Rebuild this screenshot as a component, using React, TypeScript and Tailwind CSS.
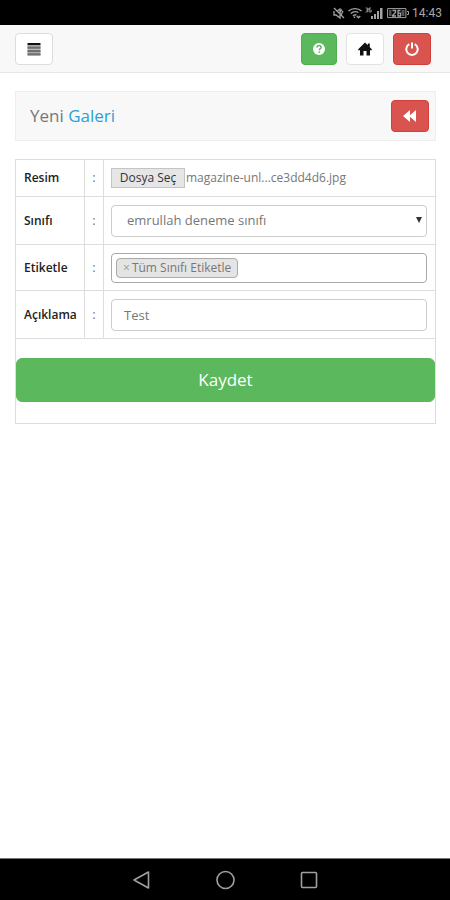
import { useState } from 'react';

const cell = 'border-b border-r border-[#dddddd]';

function StatusIcons() {
  return (
    <div className="flex items-center gap-[3px] text-[#a3a3a3]">
      {/* Muted bell */}
      <svg className="h-3 w-3" viewBox="0 0 12 12" fill="none" stroke="currentColor" strokeWidth="1.300">
        <path d="M1 4v4h2l4 3V2L3.500 4.500M9 2.500L7 5M1 1l10 10M8 8l2-4" />
      </svg>
      {/* Wifi */}
      <svg className="h-3 w-[14px]" viewBox="0 0 14 12" fill="none" stroke="currentColor" strokeWidth="1.400">
        <path d="M.5 4C4 .8 10 .8 13.500 4M2.800 6.500C5 4.500 8 4.200 10.500 5.500M5 9c1.200-1.400 2.500-1.500 3.500-.7" />
        <path d="M6.500 9.500v1.500M8.800 9l1.700 1.800L12.200 9" />
      </svg>
      {/* Mobile signal */}
      <svg className="h-3 w-[18px]" viewBox="0 0 18 12" fill="currentColor">
        <path d="M6 9h2v3H6zM9 7h2v5H9zM12 4h2v8h-2zM15 1h2.500v11H15z" />
        <path d="M.5 1h2M1 3h1.500M.5 5h2V1M4 1v4h2.200V3H4V1h2" fill="none" stroke="currentColor" strokeWidth=".8" />
      </svg>
      {/* Battery */}
      <svg className="ml-px h-3 w-[22px]" viewBox="0 0 22 12">
        <path d="M.6 1.600h18.300v9H.6zM20 4.500h1.500v3H20" fill="none" stroke="currentColor" strokeWidth="1" />
        <path d="M2 3h2.500v6H2zM14.500 3h3v6h-3z" fill="currentColor" opacity=".5" />
        <path d="M5.500 3.500h3v2l-3 3v.5h3.500M13.500 3.500H11V9h2.500V6.200H11" fill="none" stroke="currentColor" strokeWidth="1.300" />
      </svg>
    </div>
  );
}

function MenuIcon() {
  return (
    <svg className="h-[14px] w-[14px]" viewBox="0 0 14 14">
      <path d="M.5 1h13v2.200H.5z" fill="#111" />
      <path d="M.5 4.500h13v2.200H.5zM.5 8h13v2.200H.5zM.5 11.300h13v2.200H.5z" fill="#666" />
      <path d="M.5 3.200h13v10H.5z" fill="#777" opacity=".5" />
    </svg>
  );
}

function HelpIcon() {
  return (
    <svg className="h-3 w-3" viewBox="0 0 12 12">
      <circle cx="6" cy="6" r="6" fill="#fff" />
      <path d="M4 4.600C4 3.300 4.900 2.600 6 2.600s2.100.7 2.100 1.800C8.100 5.700 6.300 5.700 6.300 7.200" fill="none" stroke="#5cb85c" strokeWidth="1.500" />
      <path d="M5.500 8.300h1.600v1.500H5.500z" fill="#5cb85c" />
    </svg>
  );
}

function HomeIcon() {
  return (
    <svg className="h-[14px] w-[14px]" viewBox="0 0 14 14" fill="#111">
      <path d="M7 .5l2.800 2.800V1.500h2v3.800L13.800 7.300v1H12V13.500H8.500V9h-3v4.500H2V8.300H.2v-1z" />
    </svg>
  );
}

function PowerIcon() {
  return (
    <svg className="h-[14px] w-[14px]" viewBox="0 0 14 14" fill="none" stroke="#fff" strokeWidth="2">
      <path d="M4.300 2.200A5.700 5.700 0 1 0 9.700 2.200" />
      <path d="M7 .5v6" />
    </svg>
  );
}

function BackwardIcon() {
  return (
    <svg className="h-3 w-[14px]" viewBox="0 0 14 12" fill="#fff">
      <path d="M7 0v5.200L13 0v12L7 6.800V12L0 6z" />
    </svg>
  );
}

export default function App() {
  const [tags, setTags] = useState(['Tüm Sınıfı Etiketle']);
  const [fileName, setFileName] = useState('magazine-unl...ce3dd4d6.jpg');

  return (
    <div className="flex min-h-screen flex-col bg-white font-['Open_Sans',sans-serif] text-[13px] text-[#777777]">
      {/* Status bar */}
      <div className="flex h-[25px] items-center justify-end gap-[3px] bg-black pr-2">
        <StatusIcons />
        <span className="font-[Roboto,sans-serif] text-xs leading-4 text-[#a8a8a8]">14:43</span>
      </div>

      {/* Top bar */}
      <header className="flex h-12 items-center justify-between border-b border-[#e7e7e7] bg-[#f8f8f8] pr-[19px] pl-[15px]">
        <button aria-label="Menü" className="flex h-8 w-[38px] items-center justify-center rounded border border-[#dddddd] bg-white">
          <MenuIcon />
        </button>
        <div className="flex gap-[9px]">
          <button aria-label="Yardım" className="flex h-8 w-9 items-center justify-center rounded border border-[#4cae4c] bg-[#5cb85c]">
            <HelpIcon />
          </button>
          <button aria-label="Ana sayfa" className="flex h-8 w-[38px] items-center justify-center rounded border border-[#e3e3e3] bg-white">
            <HomeIcon />
          </button>
          <button aria-label="Çıkış" className="flex h-8 w-[38px] items-center justify-center rounded border border-[#d43f3a] bg-[#d9534f]">
            <PowerIcon />
          </button>
        </div>
      </header>

      <main className="flex-1 pt-[18px] pr-[14px] pl-[15px]">
        {/* Page title */}
        <div className="flex h-[50px] items-center justify-between border border-[#eeeeee] bg-[#f8f8f8] pr-[6px] pl-[14px]">
          <h1 className="text-[17px]">
            Yeni <span className="text-[#2a9fd6]">Galeri</span>
          </h1>
          <button aria-label="Geri" className="flex h-8 w-[38px] items-center justify-center rounded border border-[#d43f3a] bg-[#d9534f]">
            <BackwardIcon />
          </button>
        </div>

        <form className="mt-[18px] border border-[#dddddd] pb-[21px]" onSubmit={(e) => e.preventDefault()}>
          <table className="w-full table-fixed border-separate border-spacing-0">
            <colgroup>
              <col className="w-[69px]" />
              <col className="w-[19px]" />
              <col />
            </colgroup>
            <tbody>
              <tr className="h-[37px]">
                <th scope="row" className={`${cell} pl-2 text-left text-xs font-semibold text-[#222222]`}>
                  <label htmlFor="resim">Resim</label>
                </th>
                <td className={`${cell} text-center`}>:</td>
                <td className="border-b border-[#dddddd] pr-2 pl-[7px]">
                  <label htmlFor="resim" className="flex items-center">
                    <span className="flex h-5 w-[74px] items-center justify-center border border-[#c4c4c4] bg-[#e6e6e6] text-xs text-[#333333]">
                      Dosya Seç
                    </span>
                    <span className="pl-px text-xs">{fileName}</span>
                  </label>
                  <input
                    id="resim"
                    type="file"
                    className="sr-only"
                    onChange={(e) => setFileName(e.target.files?.[0]?.name ?? '')}
                  />
                </td>
              </tr>
              <tr className="h-12">
                <th scope="row" className={`${cell} pl-2 text-left text-xs font-semibold text-[#222222]`}>
                  <label htmlFor="sinif">Sınıfı</label>
                </th>
                <td className={`${cell} text-center`}>:</td>
                <td className="border-b border-[#dddddd] pr-2 pl-[7px]">
                  <div className="relative">
                    <select id="sinif" className="block h-8 w-full appearance-none rounded-sm border border-[#cccccc] bg-white pl-[15px] text-[13px]">
                      <option>emrullah deneme sınıfı</option>
                    </select>
                    <svg className="pointer-events-none absolute top-3 right-[5px] h-[6px] w-[6px]" viewBox="0 0 6 6" fill="#333">
                      <path d="M0 0h6L3 6z" />
                    </svg>
                  </div>
                </td>
              </tr>
              <tr className="h-[46px]">
                <th scope="row" className={`${cell} pl-2 text-left text-xs font-semibold text-[#222222]`}>
                  <label htmlFor="etiket">Etiketle</label>
                </th>
                <td className={`${cell} text-center`}>:</td>
                <td className="border-b border-[#dddddd] pr-2 pl-[7px]">
                  <div className="flex h-[30px] items-center gap-1 rounded-sm border border-[#aaaaaa] px-1">
                    {tags.map((tag) => (
                      <span key={tag} className="flex h-5 shrink-0 items-center rounded-sm border border-[#aaaaaa] bg-[#e4e4e4] px-[6px] text-xs whitespace-nowrap">
                        <button
                          type="button"
                          aria-label="Kaldır"
                          className="pr-0.5 text-[#999999]"
                          onClick={() => setTags(tags.filter((t) => t !== tag))}
                        >
                          ×
                        </button>
                        {tag}
                      </span>
                    ))}
                    <input id="etiket" type="text" className="min-w-0 flex-1 outline-none" />
                  </div>
                </td>
              </tr>
              <tr className="h-12">
                <th scope="row" className={`${cell} pl-2 text-left text-xs font-semibold text-[#222222]`}>
                  <label htmlFor="aciklama">Açıklama</label>
                </th>
                <td className={`${cell} text-center`}>:</td>
                <td className="border-b border-[#dddddd] pr-2 pl-[7px]">
                  <input
                    id="aciklama"
                    type="text"
                    defaultValue="Test"
                    className="block h-8 w-full rounded-sm border border-[#cccccc] px-3 text-[13px]"
                  />
                </td>
              </tr>
            </tbody>
          </table>
          <button type="submit" className="mt-[19px] block h-11 w-full rounded-md border border-[#5cb85c] bg-[#5cb85c] text-[17px] text-white">
            Kaydet
          </button>
        </form>
      </main>

      {/* Android navigation */}
      <nav className="flex h-[42px] items-center justify-center gap-16 border-t border-[#777777] bg-black">
        <button aria-label="Geri dön">
          <svg className="h-5 w-5" viewBox="0 0 20 20" fill="none" stroke="#a0a0a0" strokeWidth="1.600">
            <path d="M17.500 2v16L3 10z" strokeLinejoin="round" />
          </svg>
        </button>
        <button aria-label="Ana ekran">
          <svg className="h-5 w-5" viewBox="0 0 20 20" fill="none" stroke="#a0a0a0" strokeWidth="1.600">
            <circle cx="10.500" cy="10" r="8.500" />
          </svg>
        </button>
        <button aria-label="Son uygulamalar">
          <svg className="h-5 w-5" viewBox="0 0 20 20" fill="none" stroke="#a0a0a0" strokeWidth="1.600">
            <rect x="2.500" y="2.500" width="15" height="15" rx="1" />
          </svg>
        </button>
      </nav>
    </div>
  );
}
